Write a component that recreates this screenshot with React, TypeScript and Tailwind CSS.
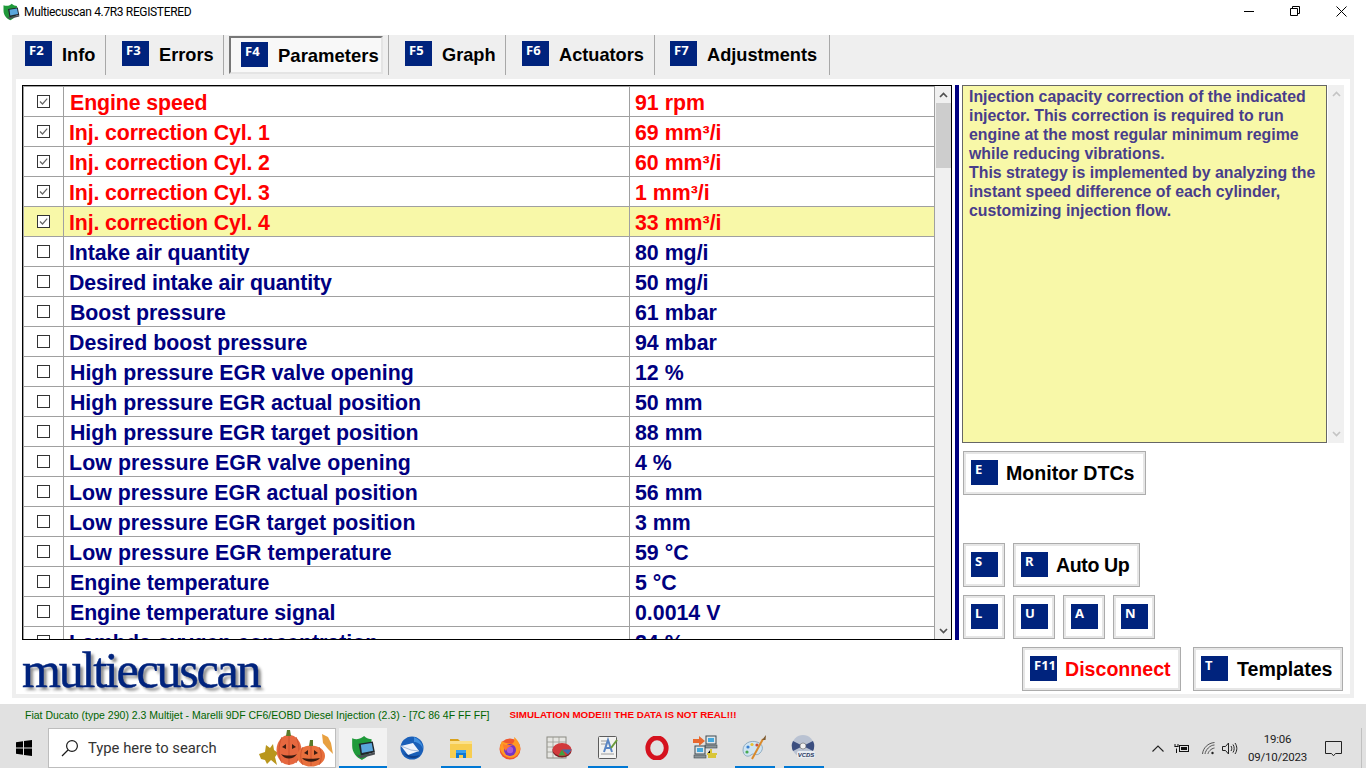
import React from "react";

const rows: [string, string, boolean, string?][] = [
  ["Engine speed", "91 rpm", true, "pl-[6px] tracking-[-0.1px]"],
  ["Inj. correction Cyl. 1", "69 mm³/i", true, "tracking-[-0.14px]"],
  ["Inj. correction Cyl. 2", "60 mm³/i", true, "tracking-[-0.14px]"],
  ["Inj. correction Cyl. 3", "1 mm³/i", true, "tracking-[-0.14px]"],
  ["Inj. correction Cyl. 4", "33 mm³/i", true, "tracking-[-0.14px]"],
  ["Intake air quantity", "80 mg/i", false, "tracking-[-0.1px]"],
  ["Desired intake air quantity", "50 mg/i", false, "tracking-[-0.15px]"],
  ["Boost pressure", "61 mbar", false, "pl-[6px] tracking-[-0.05px]"],
  ["Desired boost pressure", "94 mbar", false],
  ["High pressure EGR valve opening", "12 %", false, "pl-[6px]"],
  ["High pressure EGR actual position", "50 mm", false, "pl-[6px] tracking-[-0.03px]"],
  ["High pressure EGR target position", "88 mm", false, "pl-[6px] tracking-[-0.03px]"],
  ["Low pressure EGR valve opening", "4 %", false, "tracking-[0.1px]"],
  ["Low pressure EGR actual position", "56 mm", false, "tracking-[0.05px]"],
  ["Low pressure EGR target position", "3 mm", false, "tracking-[0.05px]"],
  ["Low pressure EGR temperature", "59 °C", false, "tracking-[0.1px]"],
  ["Engine temperature", "5 °C", false, "pl-[6px] tracking-[-0.05px]"],
  ["Engine temperature signal", "0.0014 V", false, "pl-[6px] tracking-[-0.1px]"],
  ["Lambda oxygen concentration", "24 %", false],
];

function Key({ k }: { k: string }) {
  return (
    <span className="w-[27px] h-[25px] shrink-0 bg-[#00237d] text-white font-['Noto_Sans',sans-serif] font-bold text-[13px] leading-[17px] pl-[4px] pt-[1px] block">
      {k}
    </span>
  );
}

function Tab({ k, label, cls }: { k: string; label: string; cls: string }) {
  return (
    <div className={`h-10 flex items-start pt-[6px] border-r border-[#a8a8a8] shrink-0 ${cls}`}>
      <Key k={k} />
      <span className="ml-[10px] text-[18.2px] leading-[28px] font-bold text-black">{label}</span>
    </div>
  );
}

function Btn({ k, label, cls, text }: { k: string; label?: string; cls: string; text?: string }) {
  return (
    <div className={`h-11 shrink-0 border border-[#acacac] bg-white shadow-[inset_0_0_0_2px_#e6e6e6] flex items-start pl-[7px] pt-2 ${cls}`}>
      <Key k={k} />
      {label && <span className={`text-[19.6px] leading-[26px] font-bold whitespace-nowrap ${text ?? "ml-2 text-black"}`}>{label}</span>}
    </div>
  );
}

function Check({ on }: { on: boolean }) {
  return (
    <svg width="13" height="13" viewBox="0 0 13 13" className="block">
      <rect x="0.5" y="0.5" width="12" height="12" fill="#fff" stroke="#333" />
      {on && <path d="M3 6.5 L5.5 9 L10.2 3.6" fill="none" stroke="#666" strokeWidth="1.2" />}
    </svg>
  );
}

function Chevron({ up, color = "#505050" }: { up: boolean; color?: string }) {
  return (
    <svg width="9" height="6" viewBox="0 0 9 6" className="block">
      <path d={up ? "M1 5 L4.5 1.5 L8 5" : "M1 1 L4.5 4.5 L8 1"} fill="none" stroke={color} strokeWidth="1.7" />
    </svg>
  );
}

function AppLogo({ size }: { size: number }) {
  return (
    <svg width={size} height={size} viewBox="0 0 24 24" className="block">
      <path d="M2 3 C7 5 11 3 13 1 C15 3 18 4 20 4 L19 13 C18 19 15 21 11 23 C6 21 2 16 2 10 Z" fill="#1f9a3a" />
      <path d="M8 8 L21 6 L23 16 L10 19 Z" fill="#20262c" />
      <path d="M10 9 L20 7.4 L21.4 14.6 L11 16.6 Z" fill="#5aa7dc" />
      <path d="M6 18 L10 19 L23 16 L23 18 L10 21.4 Z" fill="#4a4f55" />
    </svg>
  );
}

function Thunderbird() {
  return (
    <svg width="24" height="24" viewBox="0 0 24 24" className="block">
      <circle cx="12" cy="12" r="11.5" fill="#1a5fb8" />
      <path d="M14 1 C19 3 23 8 23 13 C21 8 18 6 14 6 Z" fill="#3f8fe0" />
      <path d="M1 10 L13 7 L19 15 L8 19 Z" fill="#eef3fb" />
      <path d="M1 10 L11 14 L19 15" fill="none" stroke="#a9bcd8" strokeWidth="1" />
      <path d="M4 17 C8 23 15 24 20 19 C14 21 9 20 4 17 Z" fill="#0e3f8c" />
    </svg>
  );
}
function Folder() {
  return (
    <svg width="24" height="22" viewBox="0 0 24 22" className="block">
      <path d="M1 2 H9 L11 4 H1 Z" fill="#d9a21c" />
      <rect x="1" y="4" width="22" height="17" fill="#f7cd50" />
      <rect x="1" y="4" width="22" height="3" fill="#fbe08a" />
      <path d="M7 15 H17 V21 H14 V18 H10 V21 H7 Z" fill="#0f78d4" />
      <rect x="7" y="13" width="10" height="3" fill="#3aa0ee" />
    </svg>
  );
}
function Firefox() {
  return (
    <svg width="24" height="24" viewBox="0 0 24 24" className="block">
      <circle cx="12" cy="13" r="10.5" fill="#f0562e" />
      <path d="M2 12 C3 22 18 27 22 14 C23 9 20 4 16 1 C17 5 16 7 13 8 C9 7 6 7 4 5 C3 7 2 9 2 12 Z" fill="#ff9a22" />
      <circle cx="12" cy="14" r="6" fill="#7434c4" />
      <circle cx="12" cy="14" r="3.2" fill="#a95ad8" />
      <path d="M5 8 C8 10 12 8 15 10 C11 10 9 12 8 15 C6 13 5 11 5 8 Z" fill="#ff7a2e" />
    </svg>
  );
}
function SheetPie() {
  return (
    <svg width="26" height="24" viewBox="0 0 26 24" className="block">
      <rect x="1" y="1" width="19" height="21" fill="#e6e6e2" stroke="#8a8a82" />
      <path d="M1 6 H20 M1 11 H20 M1 16 H20 M7 1 V22 M13 1 V22" stroke="#9a9a92" strokeWidth="0.8" />
      <ellipse cx="16" cy="15" rx="9.5" ry="6.5" fill="#7d1f22" />
      <ellipse cx="16" cy="13.5" rx="9.5" ry="6.5" fill="#d23a3c" />
      <path d="M16 13.5 L12.5 19.5 L19.5 19.5 Z" fill="#3fa142" />
      <path d="M16 13.5 L25.5 13.5 L22 18.5 Z" fill="#3b6fb0" />
    </svg>
  );
}
function Notepad() {
  return (
    <svg width="22" height="25" viewBox="0 0 22 25" className="block">
      <rect x="1.5" y="1.5" width="18" height="22" rx="1" fill="#f3f3f1" stroke="#5c5c5c" />
      <path d="M4 6 H12 M4 9 H10 M4 19 H17" stroke="#9c9c9c" />
      <path d="M7 17 L11 5 L15 17 M8.5 13 H13.5" fill="none" stroke="#5a86c4" strokeWidth="2" />
      <path d="M14 13 L20 5" stroke="#6a9a3c" strokeWidth="2" />
    </svg>
  );
}
function Opera() {
  return (
    <svg width="24" height="24" viewBox="0 0 24 24" className="block">
      <ellipse cx="12" cy="12" rx="9.2" ry="10.2" fill="none" stroke="#d5121e" strokeWidth="4.8" />
    </svg>
  );
}
function Network() {
  return (
    <svg width="25" height="25" viewBox="0 0 25 25" className="block">
      <rect x="13" y="1" width="10" height="8" fill="#dfe6ea" stroke="#3f4a50" />
      <rect x="15" y="3" width="6" height="4" fill="#43a8dc" />
      <rect x="12" y="10" width="12" height="3" fill="#8a9296" stroke="#3f4a50" strokeWidth="0.6" />
      <rect x="2" y="11" width="10" height="8" fill="#dfe6ea" stroke="#3f4a50" />
      <rect x="4" y="13" width="6" height="4" fill="#43a8dc" />
      <rect x="1" y="20" width="12" height="3" fill="#8a9296" stroke="#3f4a50" strokeWidth="0.6" />
      <path d="M0 4 H6 V1 L12 6 L6 11 V8 H0 Z" fill="#e8682e" />
      <path d="M18 14 V19 H14 M18 19 H24" stroke="#d9c63a" strokeWidth="2" />
      <rect x="15" y="20" width="8" height="3" fill="#d9c63a" />
    </svg>
  );
}
function Palette() {
  return (
    <svg width="25" height="25" viewBox="0 0 25 25" className="block">
      <path d="M1 15 C1 8 9 5 15 7 C21 9 22 14 18 18 C14 22 12 17 9 20 C5 23 1 20 1 15 Z" fill="#cfe4f2" stroke="#7d9db5" strokeWidth="0.8" />
      <circle cx="6" cy="12" r="1.6" fill="#3a7fd0" />
      <circle cx="10" cy="9.5" r="1.6" fill="#e8c030" />
      <circle cx="15" cy="10" r="1.6" fill="#d0503a" />
      <circle cx="5" cy="17" r="1.6" fill="#48a850" />
      <path d="M10 24 L21 4" stroke="#d98a2c" strokeWidth="2" />
      <path d="M20 5 L24 0 L23.5 5 Z" fill="#7d5a30" />
    </svg>
  );
}
function Vcds() {
  return (
    <svg width="25" height="25" viewBox="0 0 25 25" className="block">
      <circle cx="12" cy="11" r="11" fill="#b9c2d2" />
      <path d="M12 11 L2 6 A11 11 0 0 0 2 16 Z" fill="#3c4f80" />
      <path d="M12 11 L22 6 A11 11 0 0 1 22 16 Z" fill="#3c4f80" />
      <circle cx="12" cy="11" r="3" fill="#f2f2f2" stroke="#666" strokeWidth="0.6" />
      <rect x="6" y="16" width="18" height="7" rx="2" fill="#e9edf2" />
      <text x="15" y="22" textAnchor="middle" fontSize="6" fontWeight="bold" fontStyle="italic" fill="#27365e" fontFamily="'Liberation Sans',sans-serif">VCDS</text>
    </svg>
  );
}

function TaskItem({ children, bar }: { children: React.ReactNode; bar?: boolean }) {
  return (
    <div className="w-[49px] h-10 shrink-0 relative flex items-center justify-center pb-[1px]">
      {children}
      {bar && <div className="absolute left-[5px] right-[4px] bottom-0 h-[2px] bg-[#0078d4]" />}
    </div>
  );
}

function Pumpkins() {
  return (
    <svg width="78" height="40" viewBox="0 0 78 40" className="block">
      <path d="M0 25 L6 23 L7 16 L11 19 L14 15 L15 21 L19 24 L16 28 L18 36 L12 31 L8 35 L6 31 L2 30 Z" fill="#b9961c" />
      <path d="M63 5 L69 8 L72 14 L74 25 L69 20 L64 14 Z" fill="#e8a040" />
      <ellipse cx="30" cy="21" rx="12.5" ry="15" fill="#e6683f" />
      <path d="M30 6 V36 M23 8 C19 16 19 28 23 34 M37 8 C41 16 41 28 37 34" fill="none" stroke="#c84e2c" strokeWidth="0.8" />
      <path d="M27 7 L28 1 L31 1 L32 7 Z" fill="#5a7a2a" />
      <ellipse cx="52" cy="27" rx="14" ry="10.5" fill="#e8703c" />
      <path d="M52 17 V37 M44 18 C41 23 41 31 44 36 M60 18 C63 23 63 31 60 36" fill="none" stroke="#c84e2c" strokeWidth="0.8" />
      <path d="M50 17 L51 11 L54 11 L54 17 Z" fill="#5a7a2a" />
      <path d="M23 18 L27 15 L27 20 Z M33 15 L37 18 L33 20 Z M45 24 L49 21 L49 26 Z M55 21 L59 24 L55 26 Z" fill="#3a1c10" />
      <path d="M22 25 C26 31 34 31 38 25 C34 27 26 27 22 25 Z M43 29 C47 34 57 34 61 29 C57 30 47 30 43 29 Z" fill="#3a1c10" />
    </svg>
  );
}

export default function App() {
  return (
    <div className="w-[1366px] h-[768px] overflow-hidden bg-white flex flex-col font-['Liberation_Sans',Arial,sans-serif]">
      {/* Title bar */}
      <div className="h-[35px] shrink-0 flex items-start">
        <div className="ml-[2px] mt-[3px]"><AppLogo size={18} /></div>
        <span className="ml-[4px] mt-[4px] text-[12px] leading-[16px] tracking-[-0.35px] text-black font-['Roboto',sans-serif]">Multiecuscan 4.7R3 REGISTERED</span>
        <div className="ml-auto mr-[2px] flex">
          <div className="w-[46px] h-[22px] flex items-center justify-center">
            <svg width="10" height="10" viewBox="0 0 10 10"><path d="M0 5.5 H10" stroke="#000" /></svg>
          </div>
          <div className="w-[46px] h-[22px] flex items-center justify-center">
            <svg width="10" height="10" viewBox="0 0 10 10"><path d="M0.5 2.5 H7.5 V9.5 H0.5 Z M2.5 2.5 V0.5 H9.5 V7.5 H7.5" fill="none" stroke="#000" /></svg>
          </div>
          <div className="w-[46px] h-[22px] flex items-center justify-center">
            <svg width="11" height="11" viewBox="0 0 11 11"><path d="M0.5 0.5 L10.5 10.5 M10.5 0.5 L0.5 10.5" stroke="#000" /></svg>
          </div>
        </div>
      </div>

      {/* Main panel */}
      <div className="mx-3 w-[1342px] h-[663px] shrink-0 bg-[#efefef] px-1 pb-1 flex flex-col">
        {/* Tabs */}
        <div className="h-11 shrink-0 flex items-start">
          <Tab k="F2" label="Info" cls="w-[90px] pl-[9px]" />
          <Tab k="F3" label="Errors" cls="w-[118px] pl-4" />
          <div className="ml-[5px] mt-px w-[154px] h-[38px] shrink-0 border-2 border-t-[#777] border-l-[#777] border-r-[#e4e4e4] border-b-[#e4e4e4] bg-[#f8f8f8] flex items-start pl-[10px] pt-[4px]">
            <Key k="F4" />
            <span className="ml-[10px] text-[18.5px] leading-[28px] font-bold text-black">Parameters</span>
          </div>
          <div className="w-[6px] h-10 shrink-0 border-r border-[#a8a8a8]" />
          <Tab k="F5" label="Graph" cls="w-[117px] pl-4" />
          <Tab k="F6" label="Actuators" cls="w-[149px] pl-4" />
          <Tab k="F7" label="Adjustments" cls="w-[175px] pl-[15px]" />
        </div>

        {/* White body */}
        <div className="flex-1 bg-white flex flex-col pl-[6px] pt-[6px] pr-[7px]">
          <div className="h-[555px] shrink-0 flex">
            {/* Table */}
            <div className="w-[930px] h-[555px] shrink-0 border border-black flex overflow-hidden">
              <div className="flex-1 border-t border-l border-[#a0a0a0] overflow-hidden">
                {rows.map(([n, v, on, tw], i) => (
                  <div
                    key={n}
                    className={`h-[30px] grid grid-cols-[39px_566px_1fr] grid-rows-[29px] border-b border-[#a0a0a0] font-bold text-[21.33px] leading-[30px] ${on ? "text-[#ff0000]" : "text-[#000080]"} ${i === 4 ? "bg-[#f8f8a8]" : "bg-white"}`}
                  >
                    <div className="flex items-center justify-center pr-[1px] pb-px"><Check on={on} /></div>
                    <div className={`border-l border-[#a0a0a0] pl-[5px] pt-px whitespace-nowrap overflow-hidden ${tw ?? ""}`}>{n}</div>
                    <div className="border-l border-[#a0a0a0] pl-[5px] pt-px whitespace-nowrap overflow-hidden">{v}</div>
                  </div>
                ))}
              </div>
              <div className="w-[17px] shrink-0 bg-[#f0f0f0] border-l border-[#a0a0a0] flex flex-col items-center">
                <div className="h-[17px] flex items-center justify-center"><Chevron up /></div>
                <div className="w-[15px] h-[65px] bg-[#cdcdcd]" />
                <div className="mt-auto h-[17px] flex items-center justify-center"><Chevron up={false} /></div>
              </div>
            </div>

            <div className="ml-[3px] w-1 h-[555px] shrink-0 bg-[#000080]" />

            {/* Right column */}
            <div className="ml-[3px] flex flex-col">
              <div className="h-[358px] shrink-0 flex">
                <div className="w-[365px] h-full border border-[#666] bg-[#f8f8a8] pl-[6px] pt-px text-[#483d8b] font-bold text-[15.87px] leading-[19px]">
                  Injection capacity correction of the indicated<br />
                  injector. This correction is required to run<br />
                  engine at the most regular minimum regime<br />
                  while reducing vibrations.<br />
                  This strategy is implemented by analyzing the<br />
                  instant speed difference of each cylinder,<br />
                  customizing injection flow.
                </div>
                <div className="ml-px w-4 h-full bg-[#f0f0f0] flex flex-col items-center justify-between py-[6px]">
                  <Chevron up color="#c4c4c4" />
                  <Chevron up={false} color="#c4c4c4" />
                </div>
              </div>
              <div className="mt-2 ml-px flex">
                <Btn k="E" cls="w-[183px]" label="Monitor DTCs" />
              </div>
              <div className="mt-12 ml-px flex gap-2">
                <Btn k="S" cls="w-[42px]" />
                <Btn k="R" cls="w-[127px]" label="Auto Up" text="ml-2 text-black tracking-[-0.4px]" />
              </div>
              <div className="mt-2 ml-px flex gap-2">
                <Btn k="L" cls="w-[42px]" />
                <Btn k="U" cls="w-[42px]" />
                <Btn k="A" cls="w-[42px]" />
                <Btn k="N" cls="w-[42px]" />
              </div>
            </div>
          </div>

          {/* Bottom row */}
          <div className="flex-1 flex justify-between items-start">
            <div className="mt-[7px] font-['Liberation_Serif',serif] text-[50px] leading-[46px] tracking-[-2.2px] text-[#00237d] [-webkit-text-stroke:0.5px_#00237d] [text-shadow:3px_3px_3px_#8a8a8a]">
              multiecuscan
            </div>
            <div className="mt-[7px] flex gap-3">
              <Btn k="F11" cls="w-[159px]" label="Disconnect" text="ml-2 text-[#ff0000]" />
              <Btn k="T" cls="w-[150px]" label="Templates" text="ml-[9px] text-black" />
            </div>
          </div>
        </div>
      </div>

      {/* Status + taskbar */}
      <div className="mt-[6px] flex-1 bg-[#e1e1e1] flex flex-col">
        <div className="h-6 shrink-0 flex items-center pl-[25px] pb-[1px]">
          <span className="text-[10.5px] text-[#006400] whitespace-nowrap">Fiat Ducato (type 290) 2.3 Multijet - Marelli 9DF CF6/EOBD Diesel Injection (2.3) - [7C 86 4F FF FF]</span>
          <span className="ml-5 text-[9.8px] font-bold text-[#ff0000] whitespace-nowrap">SIMULATION MODE!!! THE DATA IS NOT REAL!!!</span>
        </div>
        <div className="h-10 shrink-0 flex items-stretch">
          <div className="w-12 shrink-0 flex items-center justify-center">
            <svg width="16" height="16" viewBox="0 0 16 16"><path d="M0 2.2 L7 1.2 V7.5 H0 Z M8 1 L16 0 V7.5 H8 Z M0 8.5 H7 V14.8 L0 13.8 Z M8 8.5 H16 V16 L8 15 Z" fill="#000" /></svg>
          </div>
          <div className="w-[288px] shrink-0 bg-white border border-[#bdbdbd] flex items-center relative">
            <svg width="18" height="18" viewBox="0 0 18 18" className="ml-[12px]" fill="none" stroke="#1a1a1a" strokeWidth="1.2">
              <circle cx="11" cy="7" r="5.4" />
              <path d="M7 11 L1 17" />
            </svg>
            <span className="ml-[9px] mt-px text-[14.8px] text-[#333] font-['Roboto',sans-serif]">Type here to search</span>
            <div className="absolute left-[210px] top-0"><Pumpkins /></div>
          </div>
          <div className="ml-[3px] w-12 shrink-0 bg-[#f2f2f2] relative flex items-center justify-center">
            <AppLogo size={26} />
            <div className="absolute left-0 right-0 bottom-0 h-[2px] bg-[#0078d4]" />
          </div>
          <TaskItem><Thunderbird /></TaskItem>
          <TaskItem bar><Folder /></TaskItem>
          <TaskItem><Firefox /></TaskItem>
          <TaskItem><SheetPie /></TaskItem>
          <TaskItem bar><Notepad /></TaskItem>
          <TaskItem><Opera /></TaskItem>
          <TaskItem><Network /></TaskItem>
          <TaskItem bar><Palette /></TaskItem>
          <TaskItem bar><Vcds /></TaskItem>

          <div className="ml-auto flex items-center">
            <div className="w-6 flex justify-center">
              <svg width="12" height="7" viewBox="0 0 12 7" fill="none" stroke="#222" strokeWidth="1.1"><path d="M0.5 6.5 L6 1 L11.5 6.5" /></svg>
            </div>
            <div className="w-6 flex justify-center">
              <svg width="16" height="11" viewBox="0 0 16 11" fill="none" stroke="#111"><rect x="5.5" y="2.5" width="9" height="6" /><rect x="7" y="4" width="6" height="3" fill="#111" stroke="none" /><path d="M1 1 V3.5 M4 1 V3.5 M0.5 3.5 H4.5 M2.5 5.5 V10" /></svg>
            </div>
            <div className="ml-[2px] w-6 flex justify-center">
              <svg width="13" height="13" viewBox="0 0 13 13" fill="none" stroke="#555"><path d="M0.5 12 C1 6 6 1 12.5 0.5 M3 12 C3.5 8 8 3 12.5 3 M6 12 C6 10 9 6.5 12.5 6" /><circle cx="10.5" cy="11" r="1.2" fill="#222" stroke="none" /></svg>
            </div>
            <div className="w-6 -ml-[2px] flex justify-center">
              <svg width="16" height="13" viewBox="0 0 16 13" fill="none" stroke="#222"><path d="M0.5 4.5 H3.5 L6.5 1 V12 L3.5 8.5 H0.5 Z M9 4 C10 5.5 10 7.5 9 9 M11 2.5 C12.6 5 12.6 8 11 10.5 M13 1 C15.4 4.5 15.4 8.5 13 12" /></svg>
            </div>
            <div className="w-[70px] pl-px text-center text-[11.5px] tracking-[-0.2px] leading-[18px] text-[#222] font-['Roboto',sans-serif] -mt-[1px]">
              <div>19:06</div>
              <div>09/10/2023</div>
            </div>
            <div className="w-[42px] flex justify-center">
              <svg width="17" height="17" viewBox="0 0 17 17" fill="none" stroke="#222"><path d="M0.5 1.5 H16.5 V13.5 H10.5 L8.5 15.8 L6.5 13.5 H0.5 Z" /></svg>
            </div>
            <div className="ml-[7px] w-[5px] h-10 border-l border-[#c0c0c0]" />
          </div>
        </div>
      </div>
    </div>
  );
}
